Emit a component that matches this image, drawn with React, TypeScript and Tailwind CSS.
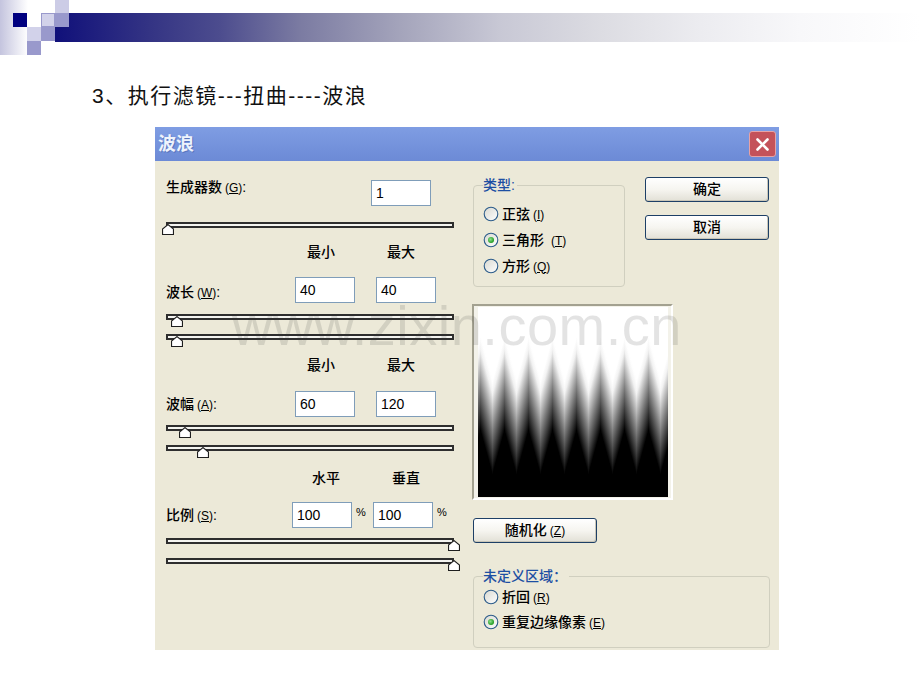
import React from "react";

function Mn({ k }: { k: string }) {
  return (
    <span className="text-[12px] ml-[3px]">
      (<span className="underline">{k}</span>)
    </span>
  );
}

function Slider({ thumb }: { thumb: string }) {
  return (
    <div className="relative w-[288px] h-[13px]">
      <div className="h-[6px] border-2 border-[#2e2e2e] bg-[#f4f4f0]" />
      <svg
        className={"absolute top-[2px] " + thumb}
        width="12"
        height="11"
        viewBox="0 0 12 11"
      >
        <path d="M0.5 10.5V5L6 0.6L11.5 5V10.5Z" fill="#ffffff" stroke="#1e1e1e" strokeWidth="1.2" />
      </svg>
    </div>
  );
}

function Box({ v, w = "w-[60px]" }: { v: string; w?: string }) {
  return (
    <div className={"h-[26px] bg-white border border-[#7f9db9] flex items-center pl-[4px] text-[14px] text-black " + w}>
      {v}
    </div>
  );
}

function Radio({ checked }: { checked?: boolean }) {
  return (
    <svg width="16" height="16" viewBox="0 0 16 16" className="shrink-0">
      <defs>
        <linearGradient id="rg" x1="0" y1="0" x2="1" y2="1">
          <stop offset="0" stopColor="#d8d8d0" />
          <stop offset="1" stopColor="#ffffff" />
        </linearGradient>
        <radialGradient id="dot" cx="0.4" cy="0.4" r="0.6">
          <stop offset="0" stopColor="#8ee08e" />
          <stop offset="1" stopColor="#1f9a1f" />
        </radialGradient>
      </defs>
      <circle cx="8" cy="8" r="6.8" fill="url(#rg)" stroke="#2b5b8a" strokeWidth="1.1" />
      {checked && <circle cx="8" cy="8" r="3" fill="url(#dot)" />}
    </svg>
  );
}

function XpButton({ children, w }: { children: React.ReactNode; w: string }) {
  return (
    <div
      className={
        "h-[25px] rounded-[3px] border border-[#1d3f66] bg-gradient-to-b from-white via-[#f6f5f0] to-[#e2e0d6] flex items-center justify-center text-[14px] font-medium text-black shadow-[inset_-1px_-1px_0_#c9c6b8] " +
        w
      }
    >
      {children}
    </div>
  );
}

function Wave() {
  const cols = Array.from({ length: 190 }, (_, x) => {
    const t = ((((x - 14) / 24) % 1) + 1) % 1;
    const d = 44 * Math.abs(2 * t - 1);
    return <rect key={x} x={x} y={30 + d} width={1.3} height={260} fill="url(#wg)" />;
  });
  return (
    <svg width="190" height="190" viewBox="0 0 190 190" className="block">
      <defs>
        <linearGradient id="wg" x1="0" y1="0" x2="0" y2="1">
          <stop offset="0" stopColor="#ffffff" />
          <stop offset="0.05" stopColor="#f2f2f2" />
          <stop offset="0.2" stopColor="#7a7a7a" />
          <stop offset="0.36" stopColor="#000000" />
          <stop offset="1" stopColor="#000000" />
        </linearGradient>
      </defs>
      <rect width="190" height="190" fill="#ffffff" />
      {cols}
    </svg>
  );
}

function Header() {
  return (
    <svg width="920" height="55" className="block">
      <defs>
        <linearGradient id="bar" x1="0" y1="0" x2="1" y2="0">
          <stop offset="0" stopColor="#10107a" />
          <stop offset="0.11" stopColor="#343484" />
          <stop offset="0.19" stopColor="#4c4c8e" />
          <stop offset="0.283" stopColor="#7b7ba2" />
          <stop offset="0.399" stopColor="#a4a4bb" />
          <stop offset="0.514" stopColor="#c8c8d5" />
          <stop offset="0.63" stopColor="#dcdce2" />
          <stop offset="0.746" stopColor="#ececf0" />
          <stop offset="0.861" stopColor="#f8f8fa" />
          <stop offset="1" stopColor="#ffffff" />
        </linearGradient>
        <linearGradient id="side" x1="0" y1="0" x2="1" y2="0">
          <stop offset="0" stopColor="#c4c4de" />
          <stop offset="1" stopColor="#ffffff" />
        </linearGradient>
      </defs>
      <rect x="0" y="0" width="28" height="55" fill="url(#side)" />
      <rect x="55" y="13" width="865" height="29" fill="url(#bar)" />
      <rect x="55" y="0" width="14" height="13" fill="#ccccE6" />
      <rect x="13" y="13" width="14" height="14" fill="#000080" />
      <rect x="41.5" y="13.5" width="13" height="13" fill="#d2d2ea" stroke="#9999cc" />
      <rect x="55" y="13" width="14" height="14" fill="#9999cc" />
      <rect x="27" y="27" width="14" height="14" fill="#d2d2ea" />
      <rect x="41" y="27" width="14" height="14" fill="#9999cc" />
      <rect x="27" y="41" width="14" height="14" fill="#9999cc" />
    </svg>
  );
}

export default function App() {
  return (
    <div className="relative w-[920px] h-[690px] bg-white overflow-hidden [font-family:'Liberation_Sans','Noto_Sans_CJK_SC',sans-serif]">
      <Header />
      <div className="pl-[92px] pt-[29px] text-[21px] leading-[23px] tracking-[1.5px] text-[#111]">
        3、执行滤镜---扭曲----波浪
      </div>

      <div className="ml-[155px] mt-[20px] w-[624px] h-[523px] bg-[#ece9d8] flex flex-col">
        {/* title bar */}
        <div className="h-[34px] bg-gradient-to-b from-[#7f9de3] to-[#6c8ad6] flex items-center justify-between pl-[3px] pr-[3px]">
          <span className="text-[18px] font-bold text-[#eef3fc] [text-shadow:1px_1px_0_#5a76bf]">波浪</span>
          <div className="w-[27px] h-[26px] rounded-[3px] bg-[#c4525a] border border-[#e7a3a6] flex items-center justify-center">
            <svg width="15" height="15" viewBox="0 0 15 15">
              <path d="M2.5 2.5L12.5 12.5M12.5 2.5L2.5 12.5" stroke="#ffffff" strokeWidth="2.6" strokeLinecap="round" />
            </svg>
          </div>
        </div>

        {/* body */}
        <div className="flex flex-1 text-[14px] text-black">
          {/* left column */}
          <div className="w-[317px] pl-[11px] flex flex-col">
            <div className="mt-[19px] h-[26px] flex items-start">
              <div className="w-[205px] leading-[16px] -mt-[1px] font-medium">
                生成器数<Mn k="G" />:
              </div>
              <Box v="1" />
            </div>
            <div className="mt-[16px]">
              <Slider thumb="left-[-4px]" />
            </div>

            <div className="mt-[9px] h-[16px] leading-[16px] flex font-medium">
              <span className="ml-[141px]">最小</span>
              <span className="ml-[52px]">最大</span>
            </div>
            <div className="mt-[17px] h-[26px] flex items-center">
              <div className="w-[129px] font-medium pt-[4px]">
                波长<Mn k="W" />:
              </div>
              <Box v="40" />
              <div className="w-[21px]" />
              <Box v="40" />
            </div>
            <div className="mt-[11px]">
              <Slider thumb="left-[5px]" />
            </div>
            <div className="mt-[7px]">
              <Slider thumb="left-[5px]" />
            </div>

            <div className="mt-[10px] h-[16px] leading-[16px] flex font-medium">
              <span className="ml-[141px]">最小</span>
              <span className="ml-[52px]">最大</span>
            </div>
            <div className="mt-[18px] h-[26px] flex items-center">
              <div className="w-[129px] font-medium">
                波幅<Mn k="A" />:
              </div>
              <Box v="60" />
              <div className="w-[21px]" />
              <Box v="120" />
            </div>
            <div className="mt-[8px]">
              <Slider thumb="left-[13px]" />
            </div>
            <div className="mt-[7px]">
              <Slider thumb="left-[31px]" />
            </div>

            <div className="mt-[12px] h-[16px] leading-[16px] flex font-medium">
              <span className="ml-[146px]">水平</span>
              <span className="ml-[52px]">垂直</span>
            </div>
            <div className="mt-[16px] h-[26px] flex items-center">
              <div className="w-[126px] font-medium">
                比例<Mn k="S" />:
              </div>
              <Box v="100" />
              <div className="w-[21px] text-[11px] pl-[4px] -mt-[6px]">%</div>
              <Box v="100" />
              <div className="text-[11px] pl-[4px] -mt-[6px]">%</div>
            </div>
            <div className="mt-[10px]">
              <Slider thumb="left-[282px]" />
            </div>
            <div className="mt-[7px]">
              <Slider thumb="left-[282px]" />
            </div>
          </div>

          {/* right column */}
          <div className="flex-1 flex flex-col">
            <div className="flex mt-[16px]">
              <fieldset className="ml-[1px] w-[152px] h-[110px] border border-[#d0cfbf] rounded-[4px] pl-[9px]">
                <legend className="text-[14px] leading-[16px] text-[#1d4fa3] font-medium pr-[2px]">类型:</legend>
                <div className="flex flex-col gap-[10px] pt-[13px]">
                  <div className="h-[16px] flex items-center gap-[3px] font-medium">
                    <Radio />
                    <span>
                      正弦<Mn k="I" />
                    </span>
                  </div>
                  <div className="h-[16px] flex items-center gap-[3px] font-medium">
                    <Radio checked />
                    <span>
                      三角形 <Mn k="T" />
                    </span>
                  </div>
                  <div className="h-[16px] flex items-center gap-[3px] font-medium">
                    <Radio />
                    <span>
                      方形<Mn k="Q" />
                    </span>
                  </div>
                </div>
              </fieldset>
              <div className="ml-[20px] flex flex-col gap-[13px]">
                <XpButton w="w-[124px]">确定</XpButton>
                <XpButton w="w-[124px]">取消</XpButton>
              </div>
            </div>

            <div className="mt-[17px] w-[201px] h-[196px] border-l-2 border-t-2 border-[#a3a190] border-r-2 border-r-white border-b-2 border-b-white bg-[#f3f2ea] pl-[4px] pt-[1px]">
              <Wave />
            </div>

            <div className="mt-[18px] ml-[1px]">
              <XpButton w="w-[124px] h-[24px]">
                随机化<Mn k="Z" />
              </XpButton>
            </div>

            <fieldset className="mt-[25px] ml-[1px] w-[297px] h-[80px] border border-[#d0cfbf] rounded-[4px] pl-[9px]">
              <legend className="text-[14px] leading-[16px] text-[#1d4fa3] font-medium pr-[2px]">未定义区域：</legend>
              <div className="flex flex-col gap-[9px] pt-[5px]">
                <div className="h-[16px] flex items-center gap-[3px] font-medium">
                  <Radio />
                  <span>
                    折回<Mn k="R" />
                  </span>
                </div>
                <div className="h-[16px] flex items-center gap-[3px] font-medium">
                  <Radio checked />
                  <span>
                    重复边缘像素<Mn k="E" />
                  </span>
                </div>
              </div>
            </fieldset>
          </div>
        </div>
      </div>

      {/* watermark */}
      <div className="absolute left-[232px] top-[298px] text-[56px] leading-[56px] tracking-[0.5px] text-[rgba(60,60,60,0.14)] pointer-events-none whitespace-nowrap [font-family:'Liberation_Sans',sans-serif]">
        www.zixin.com.cn
      </div>
    </div>
  );
}
